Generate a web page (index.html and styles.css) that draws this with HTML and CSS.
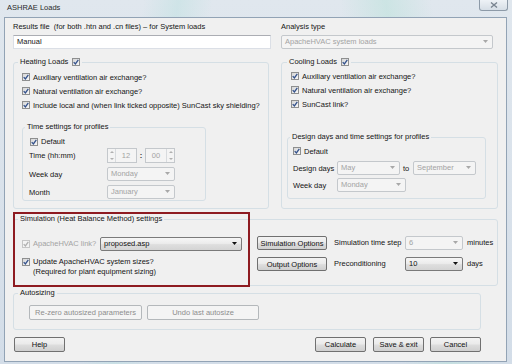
FILE: index.html
```html
<!DOCTYPE html>
<html lang="en">
<head>
  <meta charset="UTF-8">
  <meta name="viewport" content="width=device-width, initial-scale=1.0">
  <title>ASHRAE Loads</title>
  <link rel="stylesheet" href="styles.css">
</head>
<body>
  <div class="window">
    <div class="titlebar">
      <span class="title">ASHRAE Loads</span>
      <span class="close">
        <svg viewBox="0 0 8 6" width="8" height="6"><path d="M1 0.5 7 5.5M7 0.5 1 5.5"/></svg>
      </span>
    </div>

    <div class="client">
      <!-- results file / analysis type -->
      <div class="top-row">
        <div>
          <div class="lbl">Results file &nbsp;(for both .htn and .cn files) – for System loads</div>
          <div class="textbox">Manual</div>
        </div>
        <div>
          <div class="lbl">Analysis type</div>
          <div class="combo off">ApacheHVAC system loads<svg class="arrow" viewBox="0 0 5 3" width="5" height="3"><path d="M0 0h5L2.5 3z"/></svg></div>
        </div>
      </div>

      <div class="loads">
        <fieldset class="group heating">
          <legend>Heating Loads <span class="cb"><svg viewBox="0 0 6 6" width="6" height="6"><path d="M0.7 3.1 2.4 4.9 5.3 0.8"/></svg></span></legend>
          <div class="check"><span class="cb"><svg viewBox="0 0 6 6" width="6" height="6"><path d="M0.7 3.1 2.4 4.9 5.3 0.8"/></svg></span>Auxiliary ventilation air exchange?</div>
          <div class="check"><span class="cb"><svg viewBox="0 0 6 6" width="6" height="6"><path d="M0.7 3.1 2.4 4.9 5.3 0.8"/></svg></span>Natural ventilation air exchange?</div>
          <div class="check"><span class="cb"><svg viewBox="0 0 6 6" width="6" height="6"><path d="M0.7 3.1 2.4 4.9 5.3 0.8"/></svg></span>Include local and (when link ticked opposite) SunCast sky shielding?</div>

          <fieldset class="group profiles">
            <legend>Time settings for profiles</legend>
            <div class="check default"><span class="cb"><svg viewBox="0 0 6 6" width="6" height="6"><path d="M0.7 3.1 2.4 4.9 5.3 0.8"/></svg></span>Default</div>
            <div class="profile-form">
              <span>Time (hh:mm)</span>
              <div class="time">
                <div class="spin">
                  <span class="spin-arrows left"><i class="up"></i><i class="down"></i></span>
                  <span class="spin-val">12</span>
                </div>
                <span class="colon">:</span>
                <div class="spin">
                  <span class="spin-val">00</span>
                  <span class="spin-arrows"><i class="up"></i><i class="down"></i></span>
                </div>
              </div>
              <span>Week day</span>
              <div class="combo off w68">Monday<svg class="arrow" viewBox="0 0 5 3" width="5" height="3"><path d="M0 0h5L2.5 3z"/></svg></div>
              <span>Month</span>
              <div class="combo off w68">January<svg class="arrow" viewBox="0 0 5 3" width="5" height="3"><path d="M0 0h5L2.5 3z"/></svg></div>
            </div>
          </fieldset>
        </fieldset>

        <fieldset class="group cooling">
          <legend>Cooling Loads <span class="cb"><svg viewBox="0 0 6 6" width="6" height="6"><path d="M0.7 3.1 2.4 4.9 5.3 0.8"/></svg></span></legend>
          <div class="check"><span class="cb"><svg viewBox="0 0 6 6" width="6" height="6"><path d="M0.7 3.1 2.4 4.9 5.3 0.8"/></svg></span>Auxiliary ventilation air exchange?</div>
          <div class="check"><span class="cb"><svg viewBox="0 0 6 6" width="6" height="6"><path d="M0.7 3.1 2.4 4.9 5.3 0.8"/></svg></span>Natural ventilation air exchange?</div>
          <div class="check"><span class="cb"><svg viewBox="0 0 6 6" width="6" height="6"><path d="M0.7 3.1 2.4 4.9 5.3 0.8"/></svg></span>SunCast link?</div>

          <fieldset class="group design">
            <legend>Design days and time settings for profiles</legend>
            <div class="check default"><span class="cb"><svg viewBox="0 0 6 6" width="6" height="6"><path d="M0.7 3.1 2.4 4.9 5.3 0.8"/></svg></span>Default</div>
            <div class="design-form">
              <span>Design days</span>
              <div class="combo off">May<svg class="arrow" viewBox="0 0 5 3" width="5" height="3"><path d="M0 0h5L2.5 3z"/></svg></div>
              <span class="to">to</span>
              <div class="combo off">September<svg class="arrow" viewBox="0 0 5 3" width="5" height="3"><path d="M0 0h5L2.5 3z"/></svg></div>
              <span>Week day</span>
              <div class="combo off week">Monday<svg class="arrow" viewBox="0 0 5 3" width="5" height="3"><path d="M0 0h5L2.5 3z"/></svg></div>
            </div>
          </fieldset>
        </fieldset>
      </div>

      <fieldset class="group simulation">
        <legend>Simulation (Heat Balance Method) settings</legend>
        <div class="sim-grid">
          <div class="sim-link">
            <div class="check disabled"><span class="cb off"><svg viewBox="0 0 6 6" width="6" height="6"><path d="M0.7 3.1 2.4 4.9 5.3 0.8"/></svg></span>ApacheHVAC link?</div>
            <div class="combo on asp">proposed.asp<svg class="arrow" viewBox="0 0 5 3" width="5" height="3"><path d="M0 0h5L2.5 3z"/></svg></div>
          </div>
          <button class="btn">Simulation Options</button>
          <span class="sim-lbl">Simulation time step</span>
          <div class="combo off step">6<svg class="arrow" viewBox="0 0 5 3" width="5" height="3"><path d="M0 0h5L2.5 3z"/></svg></div>
          <span class="sim-lbl">minutes</span>

          <div class="check update"><span class="cb"><svg viewBox="0 0 6 6" width="6" height="6"><path d="M0.7 3.1 2.4 4.9 5.3 0.8"/></svg></span><span>Update ApacheHVAC system sizes?<br>(Required for plant equipment sizing)</span></div>
          <button class="btn">Output Options</button>
          <span class="sim-lbl">Preconditioning</span>
          <div class="combo on step">10<svg class="arrow" viewBox="0 0 5 3" width="5" height="3"><path d="M0 0h5L2.5 3z"/></svg></div>
          <span class="sim-lbl">days</span>
        </div>
      </fieldset>

      <fieldset class="group autosizing">
        <legend>Autosizing</legend>
        <div class="auto-row">
          <button class="btn off rezero">Re-zero autosized parameters</button>
          <button class="btn off undo">Undo last autosize</button>
        </div>
      </fieldset>

      <div class="footer">
        <button class="btn help">Help</button>
        <button class="btn calc">Calculate</button>
        <button class="btn save">Save &amp; exit</button>
        <button class="btn cancel">Cancel</button>
      </div>

      <!-- annotation box drawn over the simulation settings -->
      <div class="highlight"></div>
    </div>
  </div>
</body>
</html>
```

FILE: styles.css
```css
* {
  box-sizing: border-box;
}
body {
  margin: 0;
  font-family: "Liberation Sans", Arial, sans-serif;
  font-size: 7.5px;
  color: #151515;
}
.window {
  width: 512px;
  height: 364px;
  overflow: hidden;
  background:
    linear-gradient(100deg, rgba(255,255,255,0) 25%, rgba(190,225,225,0.5) 31%, rgba(255,255,255,0) 37%),
    linear-gradient(80deg, rgba(255,255,255,0) 70%, rgba(180,225,215,0.45) 78%, rgba(255,255,255,0) 86%),
    linear-gradient(#e0e7ee, #d3dde8);
}
.titlebar {
  height: 17px;
  display: flex;
  align-items: flex-start;
}
.title {
  margin: 3px 0 0 7px;
  line-height: 10px;
  color: #2a2a2a;
}
.close {
  margin-left: auto;
  margin-right: 4px;
  width: 29px;
  height: 11px;
  border: 1px solid #8d9aa8;
  border-top: none;
  border-radius: 0 0 3px 3px;
  background: linear-gradient(#eef2f6, #d6dee6);
  display: flex;
  align-items: center;
  justify-content: center;
}
.close path {
  stroke: #7a8591;
  stroke-width: 1.4;
}

.client {
  position: relative;
  margin-left: 4px;
  width: 503px;
  height: 345px;
  border: 1px solid #92a3b5;
  background: #f0f0f0;
  padding: 4px 8px 0 8px;
}

.top-row {
  display: grid;
  grid-template-columns: 258px 212px;
  column-gap: 10px;
}
.lbl {
  line-height: 10px;
  margin-bottom: 3px;
  white-space: nowrap;
}
.textbox {
  height: 14px;
  line-height: 12px;
  padding-left: 3px;
  background: #fff;
  border: 1px solid #dbdfe6;
  border-top-color: #abadb3;
}

/* combos */
.combo {
  position: relative;
  height: 14px;
  line-height: 12px;
  padding-left: 3px;
  border: 1px solid #c4c8cc;
  border-radius: 2px;
  background: #f4f4f4;
  color: #a3a3a3;
  white-space: nowrap;
}
.combo .arrow {
  position: absolute;
  right: 4px;
  top: 4px;
}
.combo.off .arrow path {
  fill: #a8a8a8;
}
.combo.on {
  color: #111;
  border-color: #7a7a7a;
  background: linear-gradient(#f6f6f6 0, #ececec 45%, #dedede 55%, #d4d4d4 100%);
}
.combo.on .arrow path {
  fill: #111;
}
.w68 {
  width: 68px;
}

/* group boxes */
.group {
  margin: 0;
  min-width: 0;
  border: 1px solid #d5dfe5;
  border-radius: 3px;
}
.group legend {
  line-height: 10px;
  padding: 0 2px;
  display: flex;
  align-items: center;
  white-space: nowrap;
}
.group legend .cb {
  margin-left: 4px;
}

.loads {
  margin-top: 8px;
  display: grid;
  grid-template-columns: 256px 217px;
  column-gap: 12px;
}
.heating {
  padding: 3px 0 7px 8px;
}
.heating legend {
  margin-left: -4px;
}
.cooling {
  padding: 2px 0 6px 5px;
}
.cooling > .check {
  margin-left: 4px;
}

.check {
  display: flex;
  align-items: center;
  height: 14px;
  gap: 3px;
  white-space: nowrap;
}
.check.disabled {
  color: #a3a3a3;
}
.cb {
  flex: none;
  width: 8px;
  height: 8px;
  border: 1px solid #8e8f8f;
  background: linear-gradient(135deg, #d6d6d6, #f8f8f8);
  display: inline-flex;
  align-items: center;
  justify-content: center;
}
.cb path {
  fill: none;
  stroke: #34528c;
  stroke-width: 1.3;
}
.cb.off {
  border-color: #c6c6c6;
  background: #f4f4f4;
}
.cb.off path {
  stroke: #b0b0b0;
}

.profiles {
  margin-top: 10px;
  width: 184px;
  padding: 3px 0 1px 6px;
}
.profiles legend {
  margin-left: -4px;
}
.profiles .default {
  height: 13px;
  margin-left: 1px;
}
.profile-form {
  display: grid;
  grid-template-columns: 78px auto;
  grid-template-rows: 15px 14px 14px;
  row-gap: 4px;
  align-items: center;
}
.time {
  display: flex;
  align-items: center;
  color: #a3a3a3;
}
.spin {
  display: flex;
  width: 30px;
  height: 15px;
  border: 1px solid #c4c8cc;
  background: #f4f4f4;
}
.spin-val {
  flex: 1;
  line-height: 13px;
  text-align: center;
}
.spin-arrows {
  width: 8px;
  display: flex;
  flex-direction: column;
  border-left: 1px solid #d8dbde;
}
.spin-arrows.left {
  border-left: none;
  border-right: 1px solid #d8dbde;
}
.spin-arrows i {
  flex: 1;
  display: flex;
  align-items: center;
  justify-content: center;
}
.spin-arrows i::before {
  content: "";
  border-left: 2px solid transparent;
  border-right: 2px solid transparent;
}
.spin-arrows .up::before {
  border-bottom: 2px solid #b0b0b0;
}
.spin-arrows .down::before {
  border-top: 2px solid #b0b0b0;
}
.colon {
  width: 8px;
  text-align: center;
  color: #333;
  font-weight: bold;
}

.design {
  margin-top: 21px;
  width: 199px;
  padding: 2px 0 6px 5px;
}
.design legend {
  margin-left: -3px;
}
.design-form {
  margin-top: 3px;
  display: grid;
  grid-template-columns: 44px 63px 13px 63px;
  grid-template-rows: 14px 14px;
  row-gap: 3px;
  align-items: center;
}
.design-form .to {
  padding-left: 3px;
}
.design-form .week {
  grid-column: span 2;
  width: 69px;
}

/* simulation */
.simulation {
  margin-top: 5px;
  width: 485px;
  padding: 12px 0 8px 8px;
}
.simulation legend {
  margin-left: -4px;
}
.sim-grid {
  display: grid;
  grid-template-columns: 235px 77px 71px 62px auto;
  grid-template-rows: 15px 20px;
  row-gap: 6px;
  align-items: start;
}
.sim-link {
  display: flex;
  align-items: center;
  height: 15px;
}
.sim-link .check {
  width: 78px;
}
.asp {
  width: 142px;
}
.sim-lbl {
  line-height: 14px;
  white-space: nowrap;
}
.step {
  width: 58px;
}
.check.update {
  height: auto;
  align-items: flex-start;
  line-height: 10px;
}
.check.update .cb {
  margin-top: 1px;
}

.btn {
  font-family: inherit;
  font-size: 7.5px;
  color: #111;
  height: 14px;
  padding: 0;
  border: 1px solid #707070;
  border-radius: 2px;
  background: linear-gradient(#f3f3f3 0, #ebebeb 45%, #dddddd 55%, #cfcfcf 100%);
  white-space: nowrap;
}
.sim-grid .btn {
  width: 70px;
}
.btn.off {
  color: #8d8d8d;
  border-color: #b4b8bb;
  background: #f4f4f4;
  height: 15px;
}

/* autosizing */
.autosizing {
  margin-top: 2px;
  width: 468px;
  padding: 7px 0 9px 15px;
}
.autosizing legend {
  margin-left: -11px;
}
.auto-row {
  display: flex;
  gap: 5px;
}
.rezero {
  width: 113px;
}
.undo {
  width: 112px;
}

/* dialog buttons */
.footer {
  margin-top: 7px;
  width: 468px;
  display: flex;
}
.footer .btn {
  width: 51px;
  height: 15px;
}
.help {
  margin-left: 1px;
}
.calc {
  margin-left: auto;
}
.save {
  margin-left: 7px;
}
.cancel {
  margin-left: 6px;
}

.highlight {
  position: absolute;
  left: 8px;
  top: 194px;
  width: 237px;
  height: 75px;
  border: 2px solid #8e1b21;
}
```
